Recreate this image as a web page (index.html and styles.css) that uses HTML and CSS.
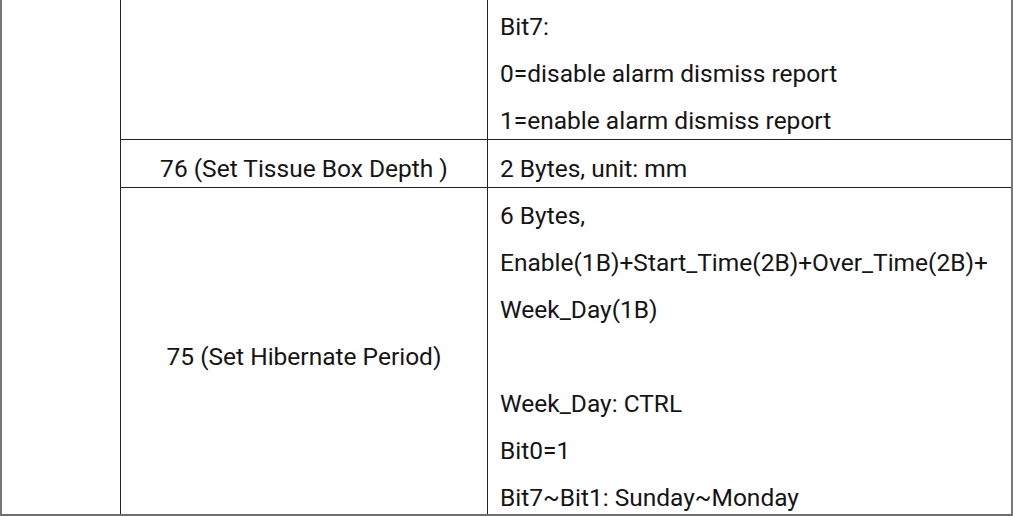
FILE: index.html
```html
<!DOCTYPE html>
<html>
<head>
<meta charset="utf-8">
<link rel="stylesheet" href="styles.css">
</head>
<body>
<div class="table">
  <div class="cell first"></div>
  <div class="cell name r1"></div>
  <div class="cell desc r1">
    <div class="ln">Bit7:</div>
    <div class="ln">0=disable alarm dismiss report</div>
    <div class="ln">1=enable alarm dismiss report</div>
  </div>
  <div class="cell name r2"><div class="ln">76 (Set Tissue Box Depth )</div></div>
  <div class="cell desc r2"><div class="ln">2 Bytes, unit: mm</div></div>
  <div class="cell name r3 mid"><div class="ln">75 (Set Hibernate Period)</div></div>
  <div class="cell desc r3">
    <div class="ln">6 Bytes,</div>
    <div class="ln">Enable(1B)+Start_Time(2B)+Over_Time(2B)+</div>
    <div class="ln">Week_Day(1B)</div>
    <div class="ln">&nbsp;</div>
    <div class="ln">Week_Day: CTRL</div>
    <div class="ln">Bit0=1</div>
    <div class="ln">Bit7~Bit1: Sunday~Monday</div>
  </div>
</div>
</body>
</html>
```

FILE: styles.css
```css
html, body {
  margin: 0;
  padding: 0;
  background: #ffffff;
}
.table {
  width: 1013px;
  height: 516px;
  box-sizing: border-box;
  border-left: 2px solid #777777;
  border-right: 2px solid #777777;
  border-bottom: 2px solid #6f6f6f;
  display: grid;
  grid-template-columns: 118px 367px 1fr;
  grid-template-rows: auto auto 1fr;
  font-family: Roboto, "Liberation Sans", sans-serif;
  font-size: 24.5px;
  color: #151515;
}
.cell {
  box-sizing: border-box;
  display: flex;
  flex-direction: column;
  gap: 14px;
  padding: 12px 0 2px;
}
.first {
  grid-row: 1 / 4;
  grid-column: 1;
  padding: 0;
}
.name {
  border-left: 1px solid #222222;
  align-items: center;
  text-align: center;
}
.desc {
  border-left: 1px solid #222222;
  padding-left: 12px;
}
.r1, .r2 {
  border-bottom: 1px solid #222222;
}
.r1 { padding-top: 10px; }
.r3 { padding-top: 11px; padding-bottom: 0; }
.mid {
  justify-content: center;
  padding-top: 10px;
}
.ln {
  line-height: 33px;
  height: 33px;
  white-space: nowrap;
}
```
